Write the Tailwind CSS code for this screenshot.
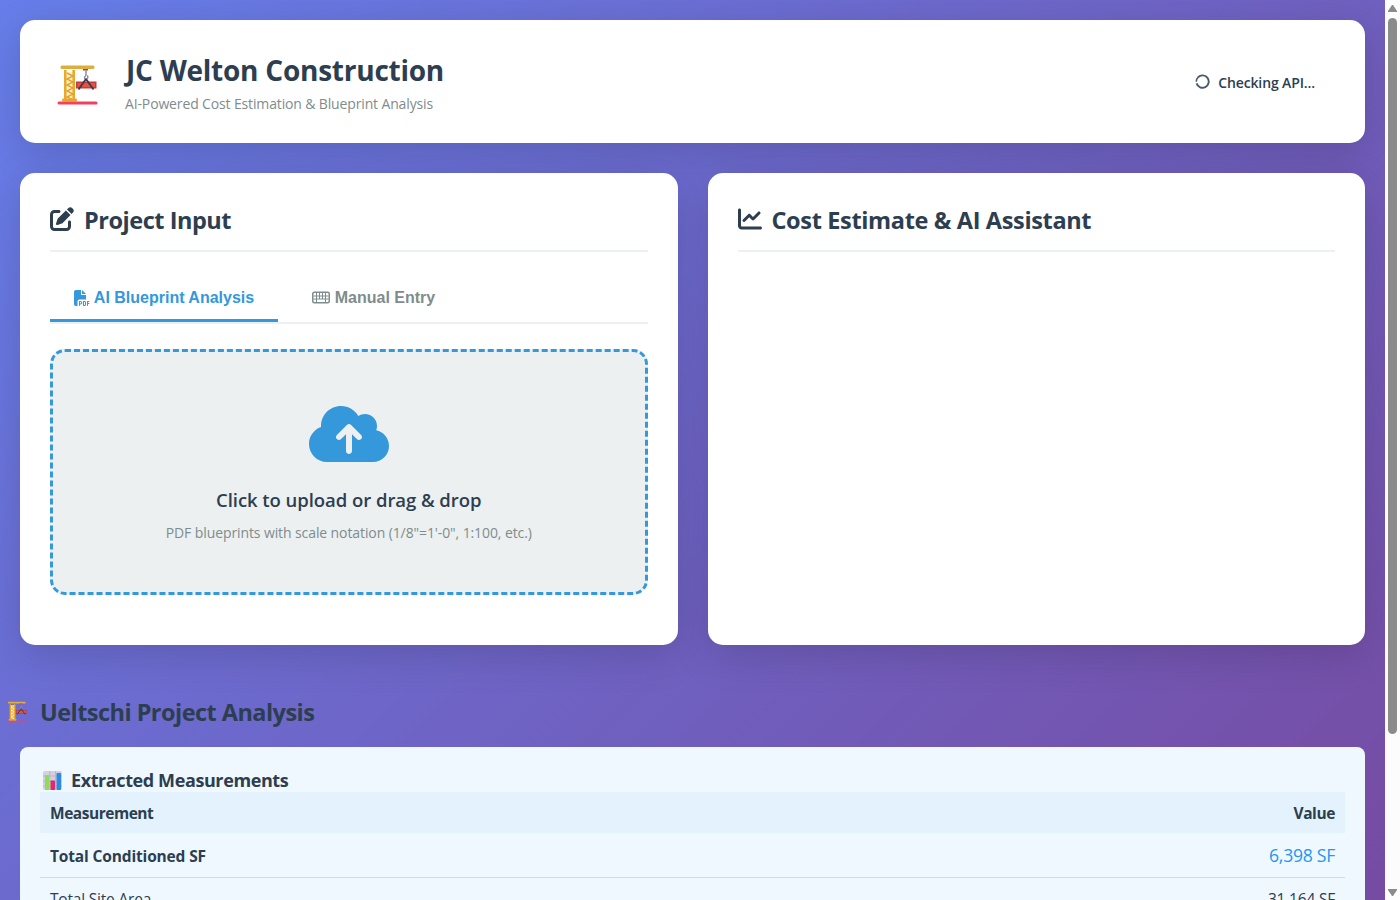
<!DOCTYPE html>
<html lang="en">
<head>
<meta charset="utf-8">
<title>JC Welton Construction</title>
<script src="https://cdn.jsdelivr.net/npm/@tailwindcss/browser@4"></script>
</head>
<body class="h-screen overflow-hidden flex font-['Open_Sans','Noto_Sans',sans-serif] text-[#2c3e50]">
<svg class="hidden">
  <symbol id="crane" viewBox="0 0 42 42">
    <path d="M8 8h9v28H8z" fill="#fff3cf"/>
    <path d="M7 6h2.600v31H7zM15.400 6H18v31h-2.600z" fill="#e9a92f"/>
    <path d="M10 9l6 3-6 3 6 3-6 3 6 3-6 3 6 3-6 3 6 3" fill="none" stroke="#e3a12c" stroke-width="1.400"/>
    <rect x="3.500" y="1.500" width="34" height="3.500" rx="1.500" fill="#dfae3a"/>
    <rect x="5" y="34.500" width="15" height="3" rx="1" fill="#e9a534"/>
    <rect x="0.500" y="37.500" width="40" height="3" rx="1.500" fill="#f3405f"/>
    <rect x="26" y="5" width="5" height="1.500" fill="#c2324c"/>
    <path d="M29 6.500v5m0 0c-3 2-1 4 .5 3.500s2-2.500.5-3.500" fill="none" stroke="#918a9c" stroke-width="1.500"/>
    <rect x="19" y="17.500" width="20.500" height="7" fill="#c43a42"/>
    <rect x="20.500" y="19" width="17.500" height="4" fill="#e2553c"/>
    <path d="M29 15l-7.500 10.500M29 15l7.500 10.500" fill="none" stroke="#41364b" stroke-width="1.800"/>
  </symbol>
</svg>
<div class="w-[1385px] h-[900px] shrink-0 overflow-hidden bg-[linear-gradient(135deg,#667eea_0%,#764ba2_100%)] pt-5">
  <header class="mx-5 h-[123px] rounded-[15px] bg-white shadow-[0_10px_40px_rgba(0,0,0,0.15)] flex items-center justify-between pl-[30px] pr-[50px]">
    <div class="flex items-center gap-5">
      <div class="w-[55px] h-[55px] flex items-center justify-center pt-1.5"><svg class="w-[42px] h-[42px]"><use href="#crane"/></svg></div>
      <div class="pt-0.5">
        <h1 class="pl-px text-[28px] leading-[38px] font-bold tracking-[-0.24px]">JC Welton Construction</h1>
        <p class="text-sm leading-5 tracking-[-0.14px] text-[#7f8c8d] mt-[5px]">AI-Powered Cost Estimation &amp; Blueprint Analysis</p>
      </div>
    </div>
    <div class="flex items-center gap-2 text-sm font-semibold tracking-[-0.12px] pt-0.5">
      <svg class="w-[15px] h-[15px] -mt-[3px]" viewBox="0 0 15 15" fill="none" stroke="#4b5a69" stroke-width="1.900"><path d="M3 3.300A6.200 6.200 0 1 1 1.600 9.400"/><path d="M1.300 7.700A6.200 6.200 0 0 1 3.200 3.100" stroke-width="1.500"/></svg>
      <span>Checking API...</span>
    </div>
  </header>

  <main class="mx-5 mt-[30px] h-[472px] grid grid-cols-2 gap-[30px]">
    <section class="rounded-[15px] bg-white shadow-[0_10px_40px_rgba(0,0,0,0.15)] px-[30px] pt-[30px]">
      <h2 class="h-[49px] border-b-2 border-[#ecf0f1] flex items-start gap-2.5 text-[23.5px] leading-[34px] font-bold tracking-[-0.47px]">
        <svg class="w-6 h-6 mt-1 shrink-0" viewBox="0 0 512 512" fill="#2c3e50"><path d="M471.600 21.700c-21.900-21.900-57.300-21.900-79.200 0L362.300 51.700l97.900 97.900 30.100-30.100c21.900-21.900 21.900-57.300 0-79.200L471.600 21.700zm-299.200 220c-6.100 6.100-10.800 13.600-13.500 21.900l-29.600 88.800c-2.900 8.600-.6 18.100 5.800 24.600s15.900 8.700 24.600 5.800l88.800-29.600c8.200-2.700 15.700-7.400 21.900-13.500L437.700 172.300 339.700 74.300 172.400 241.700zM96 64C43 64 0 107 0 160V416c0 53 43 96 96 96H352c53 0 96-43 96-96V320c0-17.700-14.300-32-32-32s-32 14.300-32 32v96c0 17.700-14.300 32-32 32H96c-17.700 0-32-14.300-32-32V160c0-17.700 14.300-32 32-32h96c17.700 0 32-14.300 32-32s-14.300-32-32-32H96z"/></svg>
        <span>Project Input</span>
      </h2>
      <div class="mt-5 h-[52px] border-b-2 border-[#ecf0f1] flex font-['Liberation_Sans',sans-serif] text-base font-bold">
        <button class="w-[228px] h-[50px] pt-[4px] border-b-[3px] border-[#3498db] text-[#3498db] flex items-center justify-center gap-1">
          <svg class="w-4 h-4 shrink-0" viewBox="0 0 512 512" fill="currentColor"><path d="M0 64C0 28.700 28.700 0 64 0H224V128c0 17.700 14.300 32 32 32H384V304H176c-35.300 0-64 28.700-64 64V512H64c-35.300 0-64-28.700-64-64V64zm384 64H256V0L384 128zM176 352h32c30.900 0 56 25.100 56 56s-25.100 56-56 56H192v32c0 8.800-7.200 16-16 16s-16-7.200-16-16V448 368c0-8.800 7.200-16 16-16zm32 80c13.300 0 24-10.700 24-24s-10.700-24-24-24H192v48h16zm96-80h32c26.500 0 48 21.500 48 48v64c0 26.500-21.500 48-48 48H304c-8.800 0-16-7.200-16-16V368c0-8.800 7.200-16 16-16zm32 128c8.800 0 16-7.200 16-16V400c0-8.800-7.200-16-16-16H320v96h16zm80-112c0-8.800 7.200-16 16-16h48c8.800 0 16 7.200 16 16s-7.200 16-16 16H448v32h32c8.800 0 16 7.200 16 16s-7.200 16-16 16H448v48c0 8.800-7.200 16-16 16s-16-7.200-16-16V432 368z"/></svg>
          <span class="pt-px">AI Blueprint Analysis</span>
        </button>
        <button class="ml-[10px] w-[171px] h-[50px] pt-[4px] border-b-[3px] border-transparent text-[#7f8c8d] flex items-center justify-center gap-[5px]">
          <svg class="w-[18px] h-4 shrink-0" viewBox="0 0 18 16" fill="none" stroke="currentColor"><rect x="0.750" y="2.250" width="16.500" height="10.500" rx="1.500" stroke-width="1.500"/><path d="M1.500 6h15M1.500 9h15M4.500 3v9M7.500 3v6M10.500 3v6M13.500 3v9" stroke-width="1"/></svg>
          <span class="pt-px">Manual Entry</span>
        </button>
      </div>
      <div class="mt-[25px] h-[246px] rounded-[15px] border-3 border-dashed border-[#3498db] bg-[#ecf0f1] flex flex-col items-center pt-[50px]">
        <svg class="w-20 h-16" viewBox="0 0 640 512" fill="#3498db"><path d="M144 480C64.500 480 0 415.500 0 336c0-62.800 40.200-116.200 96.200-135.900c-.1-2.700-.2-5.400-.2-8.100c0-88.400 71.600-160 160-160c59.300 0 111 32.200 138.700 80.200C409.900 102 428.300 96 448 96c53 0 96 43 96 96c0 12.200-2.300 23.800-6.400 34.600C596 238.400 640 290.100 640 352c0 70.700-57.300 128-128 128H144zm79-217c-9.400 9.400-9.400 24.600 0 33.900s24.600 9.400 33.900 0l39-39V392c0 13.300 10.700 24 24 24s24-10.700 24-24V257.900l39 39c9.400 9.400 24.600 9.400 33.900 0s9.400-24.600 0-33.900l-80-80c-9.400-9.400-24.600-9.400-33.900 0l-80 80z"/></svg>
        <p class="mt-[21px] text-[18.500px] leading-[26px] font-semibold tracking-[-0.05px]">Click to upload or drag &amp; drop</p>
        <p class="mt-[10px] text-sm leading-5 tracking-[-0.1px] text-[#7f8c8d]">PDF blueprints with scale notation (1/8"=1'-0", 1:100, etc.)</p>
      </div>
    </section>
    <section class="rounded-[15px] bg-white shadow-[0_10px_40px_rgba(0,0,0,0.15)] px-[30px] pt-[30px]">
      <h2 class="h-[49px] border-b-2 border-[#ecf0f1] flex items-start gap-2.5 text-[23.5px] leading-[34px] font-bold tracking-[-0.35px]">
        <svg class="w-6 h-6 mt-1 shrink-0" viewBox="0 0 512 512" fill="#2c3e50"><path d="M64 64c0-17.700-14.300-32-32-32S0 46.300 0 64V400c0 44.200 35.800 80 80 80H480c17.700 0 32-14.300 32-32s-14.300-32-32-32H80c-8.800 0-16-7.200-16-16V64zm406.600 86.600c12.500-12.500 12.500-32.800 0-45.300s-32.800-12.500-45.300 0L320 210.700l-57.400-57.400c-12.500-12.500-32.800-12.500-45.300 0l-112 112c-12.500 12.500-12.500 32.800 0 45.300s32.800 12.500 45.300 0L240 221.300l57.400 57.400c12.500 12.500 32.800 12.500 45.300 0l128-128z"/></svg>
        <span>Cost Estimate &amp; AI Assistant</span>
      </h2>
    </section>
  </main>

  <h2 class="mt-[49px] pl-1.5 h-9 flex items-center gap-3 text-[23.5px] leading-9 font-bold tracking-[-0.54px]">
    <svg class="w-[22px] h-6"><use href="#crane"/></svg><span>Ueltschi Project Analysis</span>
  </h2>
  <section class="mx-5 mt-[17px] h-[220px] rounded-lg bg-[#f0f8ff] px-5 pt-5">
    <h3 class="h-[25px] pl-[3px] flex items-center gap-[9px] text-lg leading-[25px] font-bold tracking-[-0.4px]">
      <svg class="w-[19px] h-[19px] mt-0.5" viewBox="0 0 19 19"><rect width="19" height="19" rx="2" fill="#d5cfdf"/><path d="M0 5h19M0 10h19M0 15h19M6.800 0v19M12.500 0v19" stroke="#b7afc6" stroke-width=".8"/><rect x="2" y="4" width="4" height="15" rx=".7" fill="#8fdc58"/><rect x="7.500" y="9.500" width="4.500" height="9.500" rx=".7" fill="#e3296b"/><rect x="13.500" y="2" width="4.500" height="17" rx=".7" fill="#2d8ae0"/></svg>
      <span class="pt-0.5">Extracted Measurements</span>
    </h3>
    <table class="w-full text-[15.5px]">
      <thead><tr class="h-[41px] bg-[#e3f2fd]"><th class="px-2.5 pt-0.5 text-left font-bold tracking-[-0.47px]">Measurement</th><th class="px-2.5 pt-0.5 text-right font-bold tracking-[-0.4px]">Value</th></tr></thead>
      <tbody>
        <tr class="h-[44px] border-b border-[#d5dade]"><td class="px-2.5 pt-1 font-bold tracking-[-0.15px]">Total Conditioned SF</td><td class="px-2.5 pt-px text-right text-[17.600px] tracking-[-0.27px] text-[#2196f3]">6,398 SF</td></tr>
        <tr class="h-[43px]"><td class="px-2.5 pt-0.5 tracking-[-0.2px]">Total Site Area</td><td class="px-2.5 pt-0.5 text-right tracking-[-0.2px]">31,164 SF</td></tr>
      </tbody>
    </table>
  </section>
</div>
<aside class="w-[15px] h-[900px] shrink-0 bg-[#fcfcfc] flex flex-col items-center pt-[5px]">
  <svg class="w-[9px] h-[7px] shrink-0" viewBox="0 0 9 7" fill="#8b8b8b"><path d="M4 0h1l4 6v1H0V6z"/></svg>
  <div class="mt-1.5 w-[9px] h-[716px] shrink-0 rounded-full bg-[#8b8b8b]"></div>
  <svg class="mt-[155px] w-[9px] h-[7px] shrink-0" viewBox="0 0 9 7" fill="#8b8b8b"><path d="M4 7h1l4-6V0H0v1z"/></svg>
</aside>
</body>
</html>
